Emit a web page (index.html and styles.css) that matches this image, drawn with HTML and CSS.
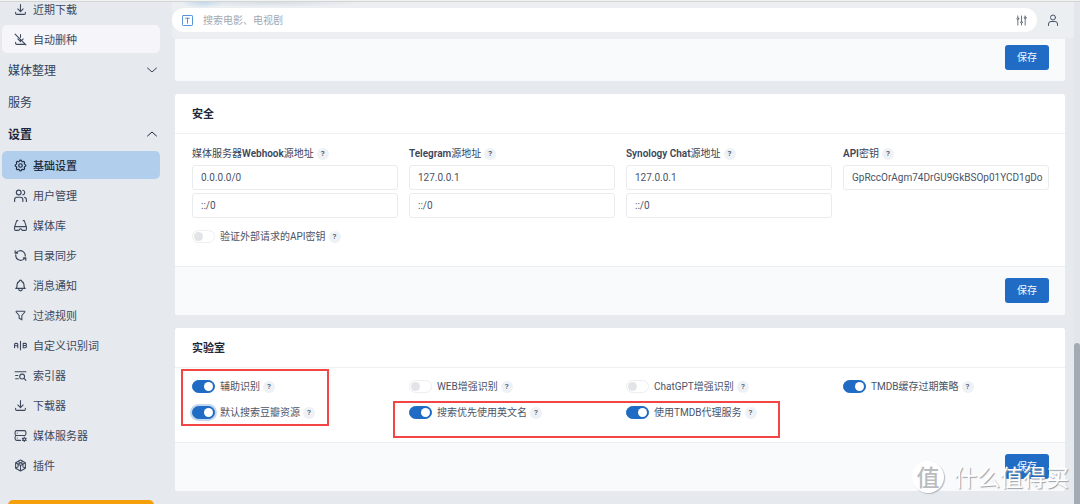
FILE: index.html
```html
<!DOCTYPE html>
<html lang="zh-CN">
<head>
<meta charset="utf-8">
<title>基础设置</title>
<link rel="stylesheet" href="styles.css">
</head>
<body>
<div class="app">
  <aside class="sidebar">
    <nav class="nav">
      <a class="item" href="#"><svg class="icon" viewBox="0 0 24 24"><path d="M3 17v2a2 2 0 0 0 2 2h14a2 2 0 0 0 2-2v-2M7 11l5 5 5-5M12 3v13"/></svg>近期下载</a>
      <a class="item item-hover" href="#"><svg class="icon" viewBox="0 0 24 24"><path d="M3 17v2a2 2 0 0 0 2 2h14a2 2 0 0 0 1.600-.8M7 11l5 5M14 14l3-3M12 3v5m0 4v4M2 2l20 20"/></svg>自动删种</a>
      <button class="group" type="button">媒体整理<svg class="chevron" viewBox="0 0 24 24"><path d="M3 8l9 8 9-8"/></svg></button>
      <a class="group" href="#">服务</a>
      <button class="group group-open" type="button">设置<svg class="chevron" viewBox="0 0 24 24"><path d="M3 16l9-8 9 8"/></svg></button>
      <div class="sublist">
        <a class="item item-active" href="#"><svg class="icon" viewBox="1 1 22 22"><path d="M10.3 4.3c.4-1.8 3-1.8 3.4 0a1.7 1.7 0 0 0 2.6 1.1c1.5-.9 3.3.8 2.4 2.4a1.7 1.7 0 0 0 1 2.5c1.800.4 1.800 3 0 3.400a1.7 1.7 0 0 0-1 2.600c.9 1.500-.9 3.300-2.400 2.400a1.700 1.700 0 0 0-2.600 1c-.4 1.800-3 1.800-3.400 0a1.700 1.700 0 0 0-2.600-1c-1.500.9-3.300-.9-2.400-2.400a1.700 1.700 0 0 0-1-2.600c-1.800-.4-1.800-3 0-3.400a1.700 1.700 0 0 0 1-2.500c-.9-1.600.9-3.300 2.400-2.400 1 .6 2.300.1 2.600-1.100z"/><circle cx="12" cy="12" r="3"/></svg>基础设置</a>
        <a class="item" href="#"><svg class="icon" viewBox="1 1 22 22"><circle cx="9" cy="7" r="4"/><path d="M2 22v-3a4 4 0 0 1 4-4h6a4 4 0 0 1 4 4v3M16 3.100a4 4 0 0 1 0 7.800M22 22v-3a4 4 0 0 0-3-3.900"/></svg>用户管理</a>
        <a class="item" href="#"><svg class="icon" viewBox="0 0 24 24"><path d="M7 3H5L1 15v4a2 2 0 0 0 2 2h5a2 2 0 0 0 2-2l2-1 2 1a2 2 0 0 0 2 2h5a2 2 0 0 0 2-2v-4L19 3h-2M1 14h22"/></svg>媒体库</a>
        <a class="item" href="#"><svg class="icon" viewBox="1 1 22 22"><path d="M9 4.500A8.100 8.100 0 0 1 20 11v2M3 4v4h4M4 11v2a8.100 8.100 0 0 0 11 6.500M21 20v-4h-4M5 7l2-1.500M19 17l-2 1.500"/></svg>目录同步</a>
        <a class="item" href="#"><svg class="icon" viewBox="1 1 22 22"><path d="M10 5a2 2 0 0 1 4 0 7 7 0 0 1 4 6v3a4 4 0 0 0 2 3H4a4 4 0 0 0 2-3v-3a7 7 0 0 1 4-6M9 17v1a3 3 0 0 0 6 0v-1"/></svg>消息通知</a>
        <a class="item" href="#"><svg class="icon" viewBox="0 0 24 24"><path d="M4.500 4h15a1 1 0 0 1 .5 1.500L14.500 12v8l-5-3v-5L4 5.500A1 1 0 0 1 4.500 4"/></svg>过滤规则</a>
        <a class="item" href="#"><svg class="icon" viewBox="0 0 24 24"><path d="M1 16v-6a2 2 0 0 1 2-2h2a2 2 0 0 1 2 2v6M1 12.500h6M12 4v16M17 16V8h4a2 2 0 0 1 0 4h-4m4 0a2 2 0 0 1 0 4h-4"/></svg>自定义识别词</a>
        <a class="item" href="#"><svg class="icon" viewBox="0 0 24 24"><circle cx="15" cy="14" r="4.500"/><path d="M18.500 17.500L22 21M2 5h20M3 12h4M3 18h5"/></svg>索引器</a>
        <a class="item" href="#"><svg class="icon" viewBox="0 0 24 24"><path d="M3 17v2a2 2 0 0 0 2 2h14a2 2 0 0 0 2-2v-2M7 11l5 5 5-5M12 3v13"/></svg>下载器</a>
        <a class="item" href="#"><svg class="icon" viewBox="0 0 24 24"><rect x="2" y="3" width="20" height="9" rx="3"/><path d="M12 21H5a3 3 0 0 1-3-3v-3a3 3 0 0 1 3-3h13M6 7.500v.1M6 16.500v.1"/><circle cx="19" cy="19" r="2.500"/><path d="M19 15v1M19 22v1M15.500 17l1 .6M21.500 20.400l1 .6M15.500 21l1-.6M21.500 17.600l1-.6"/></svg>媒体服务器</a>
        <a class="item" href="#"><svg class="icon" viewBox="0 0 24 24"><path d="M12 2l9 5v10l-9 5-9-5V7zM12 12l9-5M12 12v10M12 12L3 7M7.500 4.500l9 5v5l4.500 2.500M16.500 4.500l-9 5v5L3 17"/></svg>插件</a>
      </div>
      <button class="upgrade" type="button" aria-label="升级"></button>
    </nav>
  </aside>

  <main class="main">
    <header class="topbar">
      <div class="search">
        <svg class="icon icon-type" viewBox="0 0 24 24"><rect x="1" y="1" width="22" height="22" rx="2"/><path d="M8 7h8M12 7v11"/></svg>
        <input class="search-input" type="text" placeholder="搜索电影、电视剧" aria-label="搜索">
        <svg class="icon icon-filter" viewBox="0 0 24 24"><circle cx="4" cy="8" r="2"/><circle cx="12" cy="16" r="2"/><circle cx="20" cy="6" r="2"/><path d="M4 2v4M4 10v12M12 2v12M12 18v4M20 2v2M20 8v14"/></svg>
      </div>
      <svg class="icon icon-user" viewBox="0 0 24 24"><circle cx="12" cy="7" r="5"/><path d="M3 23v-3a5 5 0 0 1 5-5h8a5 5 0 0 1 5 5v3"/></svg>
    </header>

    <div class="cards">
      <section class="card card-first">
        <footer class="card-foot"><button class="save" type="button">保存</button></footer>
      </section>

      <section class="card">
        <h2 class="card-head">安全</h2>
        <div class="card-body">
          <div class="grid">
            <div class="field">
              <label class="label" for="webhook">媒体服务器<b>Webhook</b>源地址 <span class="help">?</span></label>
              <input class="text" id="webhook" type="text" value="0.0.0.0/0">
              <input class="text" type="text" value="::/0" aria-label="媒体服务器Webhook源地址 IPv6">
            </div>
            <div class="field">
              <label class="label" for="telegram"><b>Telegram</b>源地址 <span class="help">?</span></label>
              <input class="text" id="telegram" type="text" value="127.0.0.1">
              <input class="text" type="text" value="::/0" aria-label="Telegram源地址 IPv6">
            </div>
            <div class="field">
              <label class="label" for="synology"><b>Synology Chat</b>源地址 <span class="help">?</span></label>
              <input class="text" id="synology" type="text" value="127.0.0.1">
              <input class="text" type="text" value="::/0" aria-label="Synology Chat源地址 IPv6">
            </div>
            <div class="field">
              <label class="label" for="apikey"><b>API</b>密钥 <span class="help">?</span></label>
              <input class="text" id="apikey" type="text" value="GpRccOrAgm74DrGU9GkBSOp01YCD1gDo">
            </div>
            <label class="check"><input class="switch" type="checkbox">验证外部请求的API密钥 <span class="help">?</span></label>
          </div>
        </div>
        <footer class="card-foot"><button class="save" type="button">保存</button></footer>
      </section>

      <section class="card card-lab">
        <h2 class="card-head">实验室</h2>
        <div class="card-body">
          <div class="grid">
            <label class="check"><input class="switch" type="checkbox" checked>辅助识别 <span class="help">?</span></label>
            <label class="check"><input class="switch" type="checkbox">WEB增强识别 <span class="help">?</span></label>
            <label class="check"><input class="switch" type="checkbox">ChatGPT增强识别 <span class="help">?</span></label>
            <label class="check"><input class="switch" type="checkbox" checked>TMDB缓存过期策略 <span class="help">?</span></label>
            <label class="check"><input class="switch switch-focus" type="checkbox" checked>默认搜索豆瓣资源 <span class="help">?</span></label>
            <label class="check"><input class="switch" type="checkbox" checked>搜索优先使用英文名 <span class="help">?</span></label>
            <label class="check"><input class="switch" type="checkbox" checked>使用TMDB代理服务 <span class="help">?</span></label>
          </div>
        </div>
        <footer class="card-foot"><button class="save" type="button">保存</button></footer>
        <div class="mark mark-left"></div>
        <div class="mark mark-right"></div>
      </section>
    </div>
  </main>

  <div class="scrollbar"><div class="thumb"></div></div>
  <div class="watermark"><span class="seal">值</span><span>什么值得买</span></div>
</div>
</body>
</html>
```

FILE: styles.css
```css
* { box-sizing: border-box; }

body {
  margin: 0;
  background: #e6e9ee;
  color: #4a5468;
  font: 10px/15px "Open Sans", "Noto Sans CJK SC", sans-serif;
}

button, input { font: inherit; color: inherit; }

.app {
  position: relative;
  display: flex;
  height: 100vh;
  overflow: hidden;
  padding-top: 1px;
  border-top: 1px solid #f1f2f2;
  box-shadow: inset 0 1px 0 #d3d4d5;
}

.icon, .chevron {
  flex: none;
  width: 13px;
  height: 13px;
  fill: none;
  stroke: currentColor;
  stroke-width: 2;
  stroke-linecap: round;
  stroke-linejoin: round;
}

/* Sidebar */
.sidebar {
  flex: none;
  width: 172px;
  padding: 0 12px 0 2px;
  overflow: hidden;
}

.nav {
  display: flex;
  flex-direction: column;
  margin-top: -8px;
}

.item {
  display: flex;
  align-items: center;
  gap: 6px;
  height: 28px;
  margin: 1px 0;
  padding: 0 12px;
  border-radius: 5px;
  color: #3d485d;
  font-size: 11px;
  text-decoration: none;
}

.item-hover { background: #f6f5fa; }
.item-active { background: #b1cfec; color: #1d2a40; font-weight: 500; }

.group {
  display: flex;
  align-items: center;
  justify-content: space-between;
  height: 32px;
  padding: 0 2px 0 6px;
  border: 0;
  background: none;
  color: #364156;
  font-size: 12px;
  text-decoration: none;
}

.group-open { color: #1d273b; font-weight: 700; }
.chevron { width: 12px; height: 12px; }

.sublist {
  display: flex;
  flex-direction: column;
}

.upgrade {
  height: 32px;
  margin: 20px 6px 0;
  border: 0;
  border-radius: 5px;
  background: #f59f0a;
}

/* Main column */
.main {
  flex: 1;
  min-width: 0;
}

.topbar {
  display: flex;
  align-items: center;
  gap: 10px;
  height: 36px;
  padding-right: 15px;
  background:
    radial-gradient(ellipse 22px 6px at 31px 0, #c3d8ed, transparent),
    radial-gradient(ellipse 90px 5px at 100px 0, #d8dde3, transparent),
    #ebeff2;
}

.search {
  display: flex;
  flex: 1;
  align-items: center;
  gap: 10px;
  height: 24px;
  padding: 0 10px;
  border-radius: 12px;
  background: #fff;
}

.search-input {
  flex: 1;
  min-width: 0;
  padding: 0;
  border: 0;
  outline: 0;
  background: none;
}

.search-input::placeholder { color: #a3a8b0; }
.icon-type { width: 11px; height: 11px; color: #3f86d4; }
.icon-filter { width: 11px; height: 11px; color: #5f6878; }
.icon-user { width: 12px; height: 12px; color: #4a5468; }

.cards {
  display: flex;
  flex-direction: column;
  gap: 13px;
  padding: 0 9px 0 3px;
}

.card {
  position: relative;
  border-radius: 3px;
  background: #fff;
}

.card-head {
  margin: 0;
  padding: 12px 17px;
  border-bottom: 1px solid #eef0f3;
  color: #1d273b;
  font-size: 11px;
  font-weight: 700;
}

.card-body {
  padding: 12px 16px 22px 17px;
  font-family: Roboto, "Noto Sans CJK SC", sans-serif;
}

.card-lab .card-body { padding-top: 11px; }

.card-foot {
  display: flex;
  justify-content: flex-end;
  padding: 11px 16px 12px;
  border-top: 1px solid #eceef2;
  border-radius: 0 0 3px 3px;
  background: #f8fafc;
}

.card-first .card-foot { padding: 6px 16px 11px; }

.save {
  width: 44px;
  height: 25px;
  padding: 0;
  border: 0;
  border-radius: 3px;
  background: #206bc4;
  color: #f3f7fc;
}

.grid {
  display: grid;
  grid-template-columns: repeat(4, 1fr);
  gap: 11px;
}

.field {
  display: flex;
  flex-direction: column;
  gap: 3px;
}

.label {
  display: flex;
  align-items: center;
  margin-bottom: 1px;
  color: #3a4559;
}

.label b { font-weight: 600; }

.help {
  width: 12px;
  height: 12px;
  margin-left: 3px;
  border-radius: 50%;
  background: #eef2f7;
  font-size: 8px;
  line-height: 12px;
  font-weight: 500;
  text-align: center;
}

.text {
  width: 100%;
  height: 25px;
  padding: 0 4px 0 8px;
  border: 1px solid #e9ebee;
  border-radius: 3px;
  outline: 0;
  background: #fff;
}

.check {
  display: flex;
  align-items: center;
}

.switch {
  flex: none;
  width: 23px;
  height: 13px;
  margin: 0 5px 0 0;
  padding: 1px;
  border: 1px solid #eceef0;
  border-radius: 7px;
  appearance: none;
  background: #fff;
}

.switch::before {
  display: block;
  width: 9px;
  height: 9px;
  border-radius: 50%;
  background: #e2e4e7;
  content: "";
}

.switch:checked {
  border-color: #206bc4;
  background: #206bc4;
}

.switch:checked::before {
  margin-left: auto;
  background: #fff;
}

.switch-focus { box-shadow: 0 0 0 2px #c3d7ef; }

/* Highlight frames over the lab options */
.mark {
  position: absolute;
  border: 2px solid #f34545;
}

.mark-left { top: 41px; left: 6px; width: 148px; height: 57px; }
.mark-right { top: 73px; left: 218px; width: 387px; height: 37px; }

/* Page scrollbar */
.scrollbar {
  display: flex;
  flex: none;
  flex-direction: column;
  justify-content: flex-end;
  width: 6px;
  background: #e3e7ec;
}

.thumb {
  height: 32%;
  border-radius: 3px 3px 0 0;
  background: #a4abb5;
}

.watermark {
  position: absolute;
  right: 11px;
  bottom: 11px;
  display: flex;
  align-items: center;
  gap: 10px;
  color: #fff;
  font-size: 23px;
  line-height: 32px;
  text-shadow: 1px 1px 1px #9a9fa6;
  pointer-events: none;
}

.seal {
  width: 32px;
  height: 32px;
  border-radius: 50%;
  background: #fff;
  box-shadow: 1px 1px 1px #b4b8bd;
  color: #b9bbbe;
  font-weight: 500;
  text-align: center;
  text-shadow: none;
}
```
